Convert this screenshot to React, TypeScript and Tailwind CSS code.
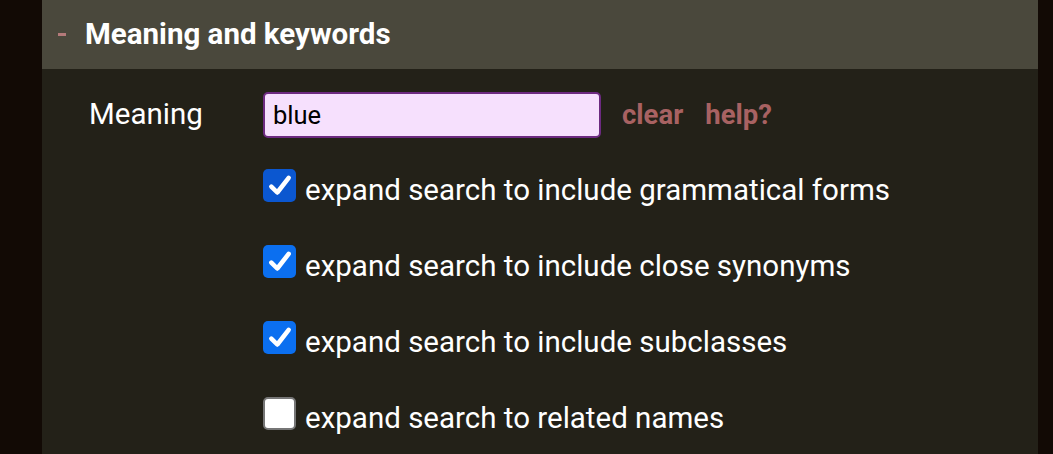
import { useState } from "react";

type Option = { label: string; checked: boolean };

const initialOptions: Option[] = [
  { label: "expand search to include grammatical forms", checked: true },
  { label: "expand search to include close synonyms", checked: true },
  { label: "expand search to include subclasses", checked: true },
  { label: "expand search to related names", checked: false },
];

function Checkbox({ checked, dark }: { checked: boolean; dark?: boolean }) {
  if (!checked) {
    return (
      <span className="w-[33px] h-[33px] shrink-0 rounded-[5px] bg-white border-2 border-[#767676]" />
    );
  }
  return (
    <span
      className={
        dark
          ? "w-[33px] h-[33px] shrink-0 rounded-[5px] bg-[#0b57d0] flex items-center justify-center"
          : "w-[33px] h-[33px] shrink-0 rounded-[5px] bg-[#0b6ff0] flex items-center justify-center"
      }
    >
      <svg width="26" height="26" viewBox="0 0 24 24" fill="none">
        <path
          d="M4 12.5 L9.5 18 L20 4.5"
          stroke="white"
          strokeWidth="4.2"
          strokeLinecap="round"
          strokeLinejoin="round"
        />
      </svg>
    </span>
  );
}

export default function App() {
  const [meaning, setMeaning] = useState("blue");
  const [options, setOptions] = useState(initialOptions);

  const toggle = (i: number) =>
    setOptions((prev) =>
      prev.map((o, idx) => (idx === i ? { ...o, checked: !o.checked } : o))
    );

  return (
    <div
      className="w-[1053px] h-[454px] bg-[#120a05] overflow-hidden"
      style={{ fontFamily: "Roboto, 'Noto Sans', sans-serif" }}
    >
      <div className="ml-[42px] w-[996px] h-full bg-[#232118]">
        <div className="h-[69px] bg-[#4a483c] flex items-center pl-[16px]">
          <span className="w-[8px] h-[3px] bg-[#b47a7a] mr-[19px]" />
          <h2 className="text-[29.5px] font-bold text-white leading-none">
            Meaning and keywords
          </h2>
        </div>

        <div className="pl-[47px] pt-[23px]">
          <div className="flex items-center h-[46px]">
            <label className="w-[174px] text-[29.5px] text-white leading-none">
              Meaning
            </label>
            <input
              value={meaning}
              onChange={(e) => setMeaning(e.target.value)}
              className="w-[338px] h-[46px] rounded-[5px] border-2 border-[#6c2a80] bg-[#f6e0fd] px-[8px] text-[25.5px] text-black outline-none"
            />
            <button className="ml-[21px] text-[27.5px] font-bold text-[#a86262] leading-none">
              clear
            </button>
            <button className="ml-[22px] text-[27.5px] font-bold text-[#a86262] leading-none">
              help?
            </button>
          </div>

          <ul className="ml-[174px] mt-[31px] flex flex-col gap-[43px]">
            {options.map((o, i) => (
              <li
                key={o.label}
                className="flex items-center h-[33px] cursor-pointer"
                onClick={() => toggle(i)}
              >
                <Checkbox checked={o.checked} dark={i === 0} />
                <span className="ml-[9px] mt-[11px] text-[29.5px] text-white whitespace-nowrap leading-none">
                  {o.label}
                </span>
              </li>
            ))}
          </ul>
        </div>
      </div>
    </div>
  );
}
